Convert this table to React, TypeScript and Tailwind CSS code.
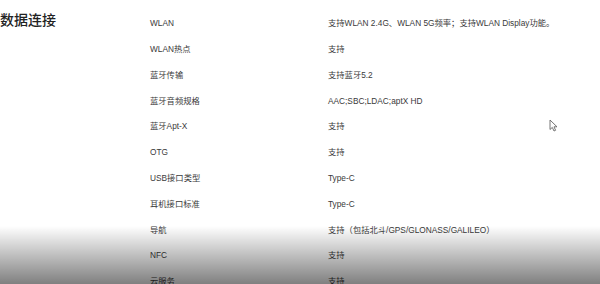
const rows: [string, string][] = [
  ["WLAN", "支持WLAN 2.4G、WLAN 5G频率；支持WLAN Display功能。"],
  ["WLAN热点", "支持"],
  ["蓝牙传输", "支持蓝牙5.2"],
  ["蓝牙音频规格", "AAC;SBC;LDAC;aptX HD"],
  ["蓝牙Apt-X", "支持"],
  ["OTG", "支持"],
  ["USB接口类型", "Type-C"],
  ["耳机接口标准", "Type-C"],
  ["导航", "支持（包括北斗/GPS/GLONASS/GALILEO）"],
  ["NFC", "支持"],
  ["云服务", "支持"],
];

const font = { fontFamily: '"Liberation Sans", "Noto Sans CJK SC", sans-serif' };

export default function App() {
  return (
    <div className="relative h-[284px] w-[600px] overflow-hidden bg-white" style={font}>
      <div className="flex">
        <div className="w-[150px] shrink-0 pt-[10px]">
          <h2 className="text-[14px] font-medium leading-[20px] text-[#222]">数据连接</h2>
        </div>
        <div className="flex flex-col pt-[10.5px]">
          {rows.map(([k, v]) => (
            <div key={k} className="flex h-[25.8px] items-center text-[8.3px] text-[#3a3a3a]">
              <div className="w-[178px] shrink-0">{k}</div>
              <div className="whitespace-nowrap">{v}</div>
            </div>
          ))}
        </div>
      </div>

      <svg className="absolute left-[549px] top-[119px]" width="9" height="13" viewBox="0 0 9 13">
        <path d="M1 1 L1 10.5 L3.3 8.4 L5 12 L6.6 11.3 L5 7.8 L8 7.8 Z" fill="#fff" stroke="#666" strokeWidth="0.9" strokeLinejoin="round" />
      </svg>

      <div className="pointer-events-none absolute inset-x-0 bottom-0 h-[58px] bg-gradient-to-b from-transparent to-black/50" />
    </div>
  );
}
